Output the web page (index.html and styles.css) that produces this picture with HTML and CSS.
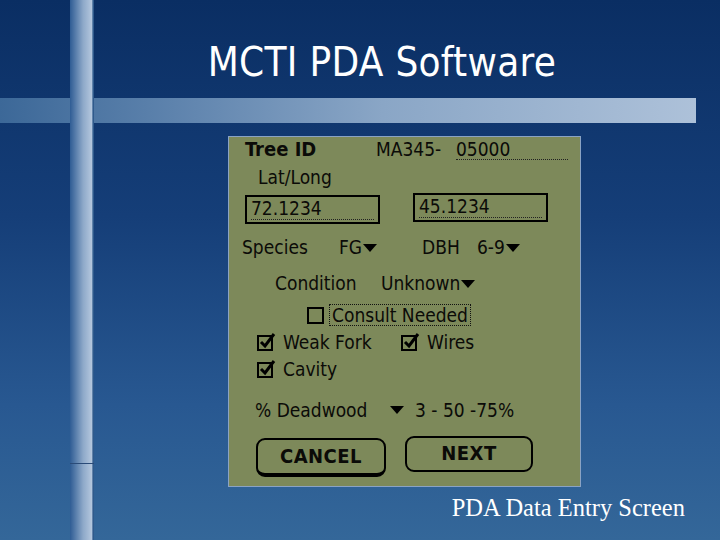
FILE: index.html
```html
<!DOCTYPE html>
<html>
<head>
<meta charset="utf-8">
<link rel="stylesheet" href="styles.css">
</head>
<body>
<div class="slide">
  <div class="hbar"></div>
  <div class="vbar"></div>
  <div class="vtick"></div>

  <header class="head">
    <h1 class="title">MCTI PDA Software</h1>
  </header>

  <main class="screen">
    <div class="row r1">
      <span class="w-tree bold">Tree ID</span>
      <span class="w-ma">MA345-</span>
      <span class="dotline">05000</span>
    </div>
    <div class="row r2"><span>Lat/Long</span></div>
    <div class="row r3">
      <div class="field f1"><span class="dotin">72.1234</span></div>
      <div class="field f2"><span class="dotin">45.1234</span></div>
    </div>
    <div class="row r4">
      <span class="w-species">Species</span>
      <span class="w-fg">FG<i class="tri"></i></span>
      <span class="w-dbh">DBH</span>
      <span>6-9<i class="tri"></i></span>
    </div>
    <div class="row r5">
      <span class="w-cond">Condition</span>
      <span>Unknown<i class="tri"></i></span>
    </div>
    <div class="row r6">
      <span class="box"></span>
      <span class="consult">Consult Needed</span>
    </div>
    <div class="row r7">
      <span class="chk">
        <svg width="20" height="20" viewBox="0 0 20 20"><rect x="1" y="4" width="14" height="14" fill="none" stroke="#000" stroke-width="2"/><path d="M4 10 L8 14 L17 2" fill="none" stroke="#000" stroke-width="3"/></svg>
      </span>
      <span class="w-weak">Weak Fork</span>
      <span class="chk">
        <svg width="20" height="20" viewBox="0 0 20 20"><rect x="1" y="4" width="14" height="14" fill="none" stroke="#000" stroke-width="2"/><path d="M4 10 L8 14 L17 2" fill="none" stroke="#000" stroke-width="3"/></svg>
      </span>
      <span>Wires</span>
    </div>
    <div class="row r8">
      <span class="chk">
        <svg width="20" height="20" viewBox="0 0 20 20"><rect x="1" y="4" width="14" height="14" fill="none" stroke="#000" stroke-width="2"/><path d="M4 10 L8 14 L17 2" fill="none" stroke="#000" stroke-width="3"/></svg>
      </span>
      <span>Cavity</span>
    </div>
    <div class="row r9">
      <span class="w-dead">% Deadwood</span>
      <i class="tri big"></i>
      <span class="vals">3 - 50 -75%</span>
    </div>
    <div class="row r10">
      <div class="btn cancel">CANCEL</div>
      <div class="btn next">NEXT</div>
    </div>
  </main>

  <footer class="caption">PDA Data Entry Screen</footer>
</div>
</body>
</html>
```

FILE: styles.css
```css
html, body {
  margin: 0;
  padding: 0;
}
.slide {
  position: relative;
  width: 720px;
  height: 540px;
  overflow: hidden;
  background: linear-gradient(180deg, #0a2e63 0%, #153e78 40%, #285891 75%, #346799 100%);
}
.hbar {
  position: absolute;
  left: 0;
  top: 98px;
  width: 696px;
  height: 25px;
  background: linear-gradient(90deg, #3c6898 0%, #5e83ad 25%, #8aa6c6 55%, #adc1d9 100%);
}
.vbar {
  position: absolute;
  left: 70px;
  top: 0;
  width: 24px;
  height: 540px;
  background: linear-gradient(90deg, #2f5c94 0%, #5a7fac 25%, #8ea9c9 55%, #b3c6dd 90%, #2f5a8c 96%, #2f5a8c 100%);
}
.vtick {
  position: absolute;
  left: 70px;
  top: 463px;
  width: 24px;
  height: 1px;
  background: #2a4b78;
}
.head {
  position: relative;
  height: 136px;
  display: flex;
  justify-content: center;
}
.title {
  margin: 36px 0 0 44px;
  font-family: "DejaVu Sans Condensed", "DejaVu Sans", sans-serif;
  font-weight: normal;
  font-size: 40px;
  letter-spacing: 0.3px;
  color: #ffffff;
  line-height: 52px;
}
.screen {
  position: relative;
  margin-left: 228px;
  width: 353px;
  height: 351px;
  background: #7d895a;
  border: 1px solid #8aa3c4;
  box-sizing: border-box;
  font-family: "DejaVu Sans Condensed", "DejaVu Sans", sans-serif;
  font-size: 19px;
  color: #0b0b08;
}
.row {
  display: flex;
  align-items: center;
  height: 24px;
  line-height: 24px;
  white-space: nowrap;
}
.bold { font-weight: bold; }
.r1 { padding-left: 16px; margin-top: 0; }
.w-tree { width: 131px; font-size: 20px; }
.w-ma { width: 80px; }
.dotline {
  display: inline-block;
  width: 112px;
  border-bottom: 1px dotted #222;
  line-height: 20px;
}
.r2 { padding-left: 29px; margin-top: 4px; }
.r3 { padding-left: 16px; margin-top: 4px; height: 31px; align-items: flex-start; }
.field {
  width: 135px;
  height: 29px;
  border: 2px solid #000;
  box-sizing: border-box;
  padding: 0 4px;
}
.f1 { margin-top: 2px; }
.f2 { margin-left: 33px; }
.dotin {
  display: block;
  line-height: 22px;
  border-bottom: 1px dotted #222;
}
.r4 { padding-left: 13px; margin-top: 11px; }
.w-species { width: 97px; }
.w-fg { width: 83px; }
.w-dbh { width: 55px; }
.tri {
  display: inline-block;
  width: 0;
  height: 0;
  border-left: 7px solid transparent;
  border-right: 7px solid transparent;
  border-top: 8px solid #000;
  margin-left: 1px;
  vertical-align: 2px;
}
.tri.big { margin-left: 0; margin-right: 11px; }
.r5 { padding-left: 46px; margin-top: 12px; }
.w-cond { width: 106px; }
.r6 { padding-left: 78px; margin-top: 8px; }
.box {
  width: 13px;
  height: 13px;
  border: 2px solid #000;
  margin-right: 5px;
}
.consult {
  border: 1px dotted #111;
  padding: 0 2px;
  line-height: 20px;
}
.r7 { padding-left: 28px; margin-top: 3px; }
.chk {
  display: inline-flex;
  width: 26px;
  height: 20px;
}
.w-weak { width: 118px; }
.r8 { padding-left: 28px; margin-top: 3px; }
.r9 { padding-left: 26px; margin-top: 17px; }
.w-dead { width: 135px; }
.r10 { padding-left: 27px; margin-top: 14px; height: 40px; align-items: flex-start; }
.btn {
  box-sizing: border-box;
  border: 2px solid #000;
  border-radius: 9px;
  font-weight: bold;
  font-size: 20px;
  text-align: center;
  letter-spacing: 0.5px;
}
.cancel {
  width: 130px;
  height: 39px;
  margin-top: 2px;
  border-bottom-width: 4px;
  line-height: 33px;
}
.next {
  width: 128px;
  height: 36px;
  margin-left: 19px;
  line-height: 30px;
}
.caption {
  position: relative;
  margin: 7px 35px 0 0;
  text-align: right;
  font-family: "Liberation Serif", serif;
  font-size: 24.5px;
  color: #ffffff;
}
```
